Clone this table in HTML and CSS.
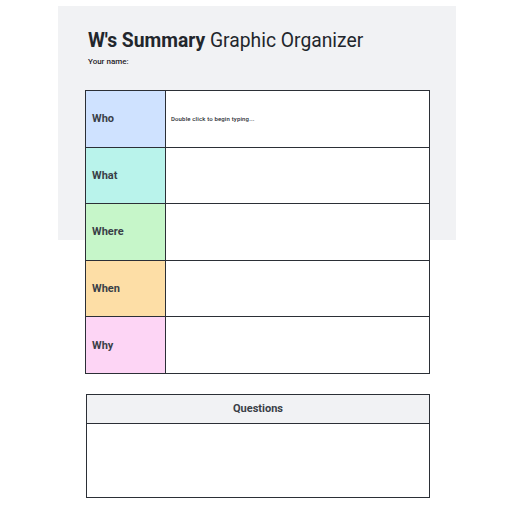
FILE: index.html
```html
<!DOCTYPE html>
<html>
<head>
<meta charset="utf-8">
<link rel="stylesheet" href="styles.css">
</head>
<body>
<div class="page">
  <header class="head">
    <h1 class="title"><b>W's Summary</b> Graphic Organizer</h1>
    <div class="name">Your name:</div>
  </header>
  <div class="grid">
    <div class="label who">Who</div>
    <div class="cell"><span class="hint">Double click to begin typing...</span></div>
    <div class="label what">What</div>
    <div class="cell"></div>
    <div class="label where">Where</div>
    <div class="cell"></div>
    <div class="label when">When</div>
    <div class="cell"></div>
    <div class="label why last">Why</div>
    <div class="cell last"></div>
  </div>
  <div class="questions">
    <div class="q-head">Questions</div>
    <div class="q-body"></div>
  </div>
</div>
</body>
</html>
```

FILE: styles.css
```css
html, body {
  margin: 0;
  padding: 0;
  background: #ffffff;
}
body {
  font-family: Roboto, "Liberation Sans", sans-serif;
  color: #2b2f36;
}
.page {
  width: 398px;
  box-sizing: border-box;
  margin: 6px 0 0 58px;
  padding: 23px 26px 0 27px;
  background: linear-gradient(#f1f2f4, #f1f2f4) no-repeat left top / 100% 234px;
}
.head {
  padding-left: 3px;
}
.title {
  margin: 0;
  font-size: 19.3px;
  line-height: 24px;
  font-weight: 400;
  color: #22262c;
}
.title b {
  font-weight: 700;
}
.name {
  margin-top: 4px;
  font-size: 8px;
  line-height: 10px;
  font-weight: 500;
  color: #1f2227;
}
.grid {
  margin-top: 23px;
  display: grid;
  grid-template-columns: 80px 1fr;
  grid-template-rows: 56.6px 56.6px 56.6px 56.6px 55.6px;
  border: 1px solid #2b2f36;
}
.label, .cell {
  box-sizing: border-box;
  border-bottom: 1px solid #2b2f36;
  display: flex;
  align-items: center;
}
.label {
  border-right: 1px solid #2b2f36;
  padding-left: 6px;
  font-size: 11px;
  font-weight: 700;
  color: #3a3f47;
}
.cell {
  background: #ffffff;
  padding-left: 5px;
}
.grid .last {
  border-bottom: none;
}
.who { background: #cfe2ff; }
.what { background: #b9f3eb; }
.where { background: #c6f6c9; }
.when { background: #fddea6; }
.why { background: #fdd5f5; }
.hint {
  font-size: 6px;
  letter-spacing: 0.15px;
  font-weight: 500;
  color: #2a2d33;
}
.questions {
  margin: 20px 0 0 1px;
  border: 1px solid #2b2f36;
}
.q-head {
  height: 28px;
  background: #f1f2f4;
  border-bottom: 1px solid #2b2f36;
  display: flex;
  align-items: center;
  justify-content: center;
  font-size: 11px;
  font-weight: 700;
  color: #3a3f47;
}
.q-body {
  height: 73px;
  background: #ffffff;
}
```
